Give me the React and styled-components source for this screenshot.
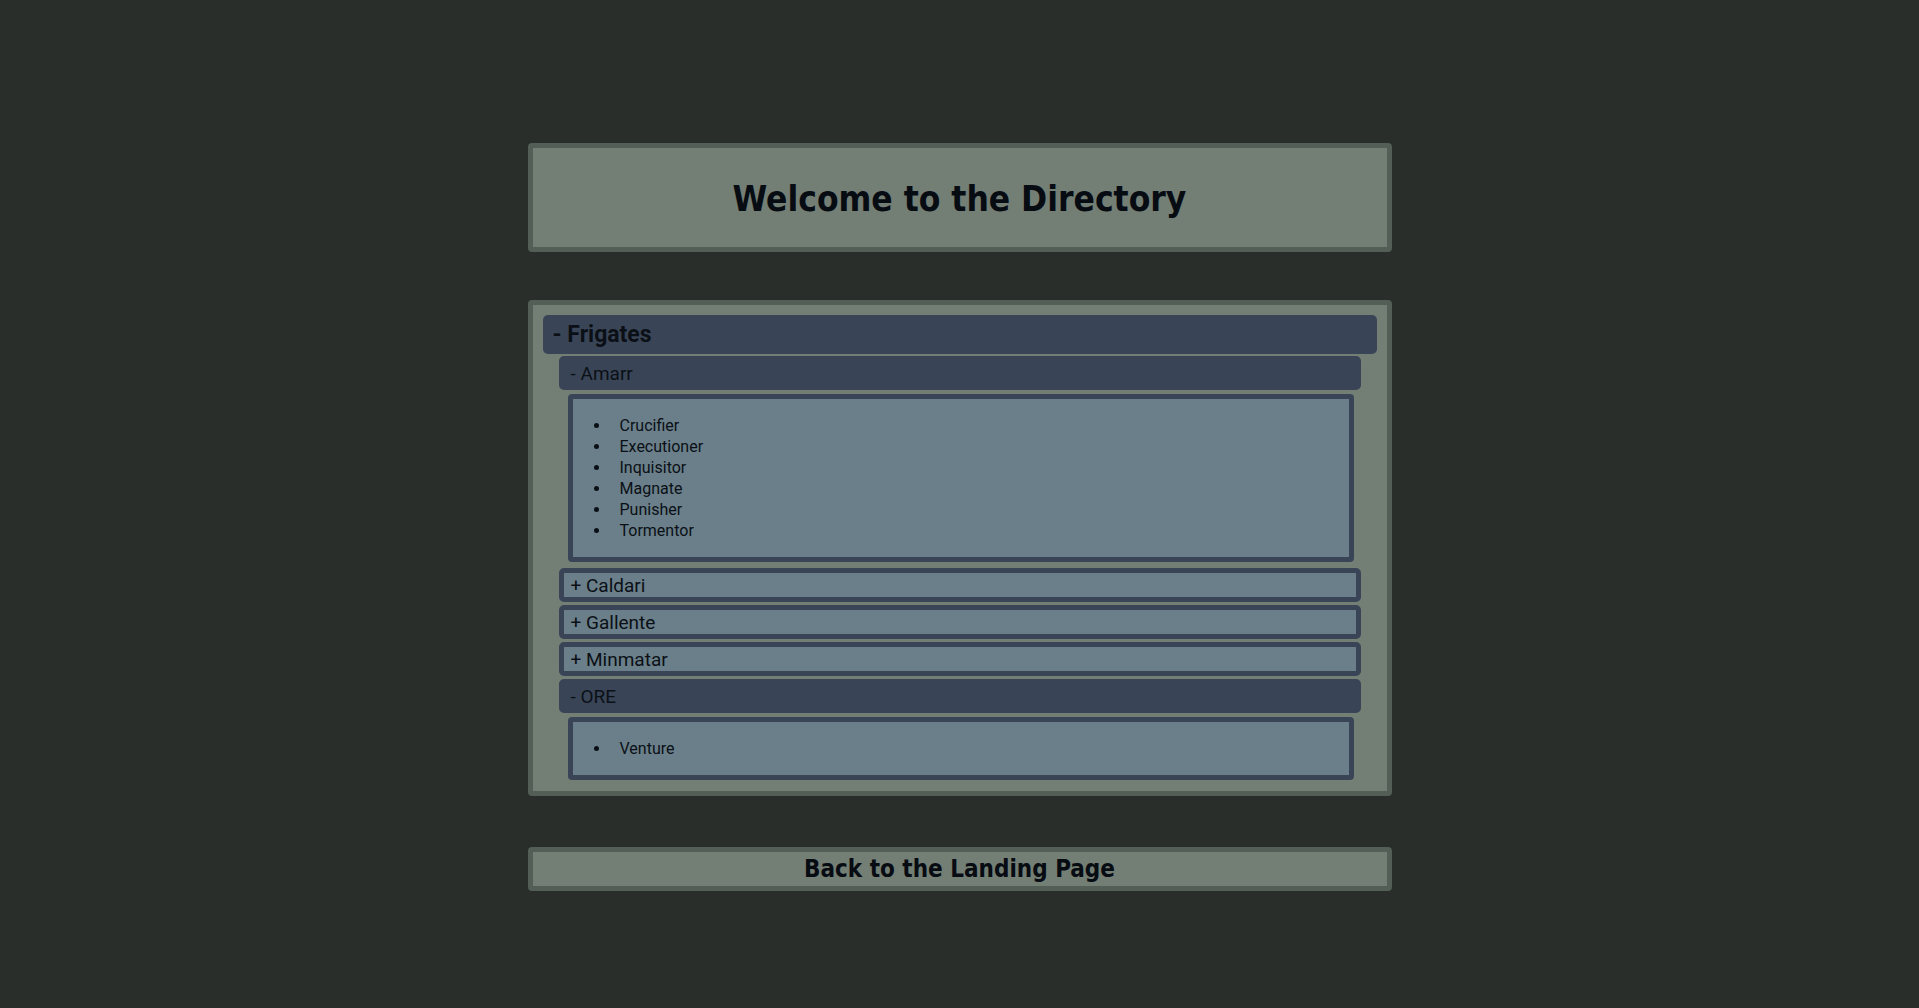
import React, { useState } from 'react';
import styled, { createGlobalStyle } from 'styled-components';

const GlobalStyle = createGlobalStyle`
    html, body {
        margin: 0;
        padding: 0;
        background-color: #292e2a;
        font-family: Roboto, "Open Sans", sans-serif;
        color: #0b1016;
    }
`;

const Page = styled.div`
    width: 864px;
    margin: 0 auto;
    padding-top: 143px;
    padding-bottom: 119px;
`;

const Header = styled.header`
    box-sizing: border-box;
    height: 109px;
    background-color: #737e74;
    border: 5px solid #535e57;
    border-radius: 4px;
    display: flex;
    align-items: center;
    justify-content: center;
`;

const Title = styled.h1`
    margin: 0;
    padding-top: 2px;
    font-family: "Liberation Sans Narrow", "DejaVu Sans Condensed", Roboto, sans-serif;
    font-stretch: condensed;
    font-size: 35px;
    font-weight: 700;
    color: #070b12;
`;

const Panel = styled.section`
    margin-top: 48px;
    background-color: #737e74;
    border: 5px solid #535e57;
    border-radius: 4px;
    padding: 10px 10px 11px;
`;

const CategoryBar = styled.div`
    box-sizing: border-box;
    height: 39px;
    background-color: #394557;
    border-radius: 5px;
    padding-left: 10px;
    display: flex;
    align-items: center;
    font-size: 23px;
    font-weight: 700;
    cursor: pointer;
`;

const Groups = styled.div`
    padding: 0 16px;
`;

const GroupBar = styled.div`
    box-sizing: border-box;
    height: 34px;
    margin-top: ${p => (p.$gap ? p.$gap : 3)}px;
    background-color: ${p => (p.$open ? '#394557' : '#6a7f89')};
    border: 5px solid #394557;
    border-radius: 5px;
    padding-left: 7px;
    display: flex;
    align-items: center;
    font-size: 19px;
    cursor: pointer;
`;

const ShipBox = styled.div`
    margin: 4px 7px 0 9px;
    background-color: #6a7f89;
    border: 5px solid #394557;
    border-radius: 4px;
`;

const ShipList = styled.ul`
    margin: 16px 0;
    padding-left: 38px;
`;

const Ship = styled.li`
    font-size: 16px;
    line-height: 21px;
    padding-left: 9px;
`;

const BackButton = styled.button`
    display: block;
    box-sizing: border-box;
    width: 100%;
    height: 44px;
    margin-top: 51px;
    background-color: #737e74;
    border: 5px solid #535e57;
    border-radius: 4px;
    font-family: "Liberation Sans Narrow", "DejaVu Sans Condensed", Roboto, sans-serif;
    font-stretch: condensed;
    font-size: 24px;
    font-weight: 700;
    color: #070b12;
    cursor: pointer;
    padding: 0;
`;

const races = [
    { name: 'Amarr', ships: ['Crucifier', 'Executioner', 'Inquisitor', 'Magnate', 'Punisher', 'Tormentor'] },
    { name: 'Caldari', ships: ['Bantam', 'Condor', 'Griffin', 'Heron', 'Kestrel', 'Merlin'] },
    { name: 'Gallente', ships: ['Atron', 'Imicus', 'Incursus', 'Maulus', 'Navitas', 'Tristan'] },
    { name: 'Minmatar', ships: ['Breacher', 'Burst', 'Probe', 'Rifter', 'Slasher', 'Vigil'] },
    { name: 'ORE', ships: ['Venture'] },
];

const App = () => {
    const [open, setOpen] = useState({ Amarr: true, ORE: true });
    const [frigatesOpen, setFrigatesOpen] = useState(true);

    const toggle = name => setOpen(o => ({ ...o, [name]: !o[name] }));

    let prevOpen = false;

    return (
        <>
            <GlobalStyle />
            <Page>
                <Header>
                    <Title>Welcome to the Directory</Title>
                </Header>

                <Panel>
                    <CategoryBar onClick={() => setFrigatesOpen(!frigatesOpen)}>
                        {frigatesOpen ? '-' : '+'}&nbsp;Frigates
                    </CategoryBar>
                    {frigatesOpen && (
                        <Groups>
                            {races.map((race, i) => {
                                const isOpen = !!open[race.name];
                                const gap = i === 0 ? 2 : prevOpen ? 6 : 3;
                                prevOpen = isOpen;
                                return (
                                    <React.Fragment key={race.name}>
                                        <GroupBar $open={isOpen} $gap={gap} onClick={() => toggle(race.name)}>
                                            {isOpen ? '-' : '+'}&nbsp;{race.name}
                                        </GroupBar>
                                        {isOpen && (
                                            <ShipBox>
                                                <ShipList>
                                                    {race.ships.map(s => (
                                                        <Ship key={s}>{s}</Ship>
                                                    ))}
                                                </ShipList>
                                            </ShipBox>
                                        )}
                                    </React.Fragment>
                                );
                            })}
                        </Groups>
                    )}
                </Panel>

                <BackButton>Back to the Landing Page</BackButton>
            </Page>
        </>
    );
};

export default App;
